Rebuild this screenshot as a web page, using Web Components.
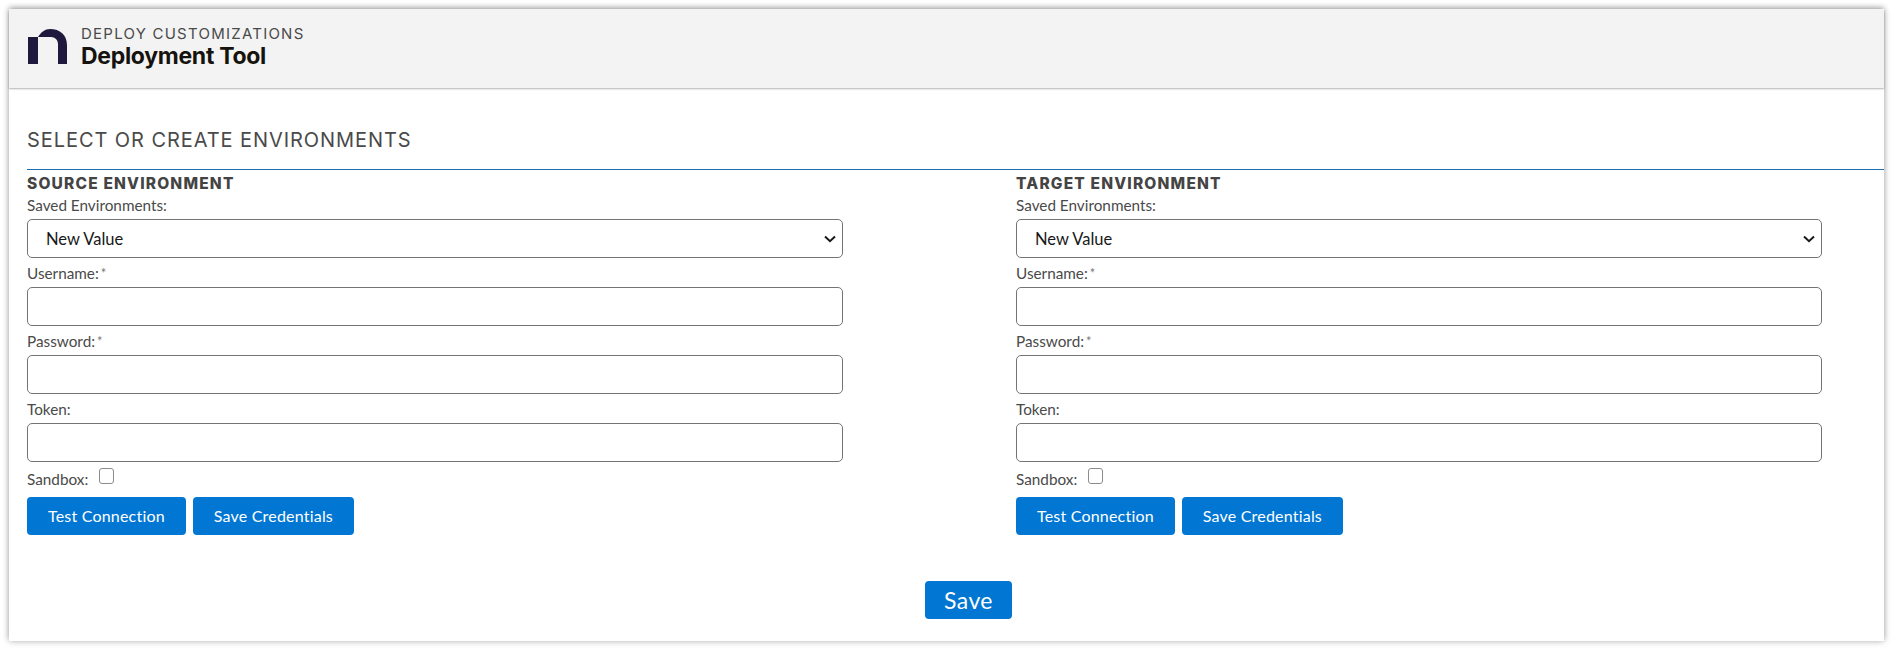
<!DOCTYPE html>
<html lang="en">
<head>
<meta charset="utf-8">
<title>Deployment Tool</title>
<style>
  html, body { margin: 0; background: #fff; }
  body { padding: 9px 8px 8px 9px; font-family: "Lato", "Liberation Sans", sans-serif; color: #444; }
</style>
</head>
<body>
<deploy-app></deploy-app>

<script>
class PageHeader extends HTMLElement {
  constructor() {
    super();
    this.attachShadow({ mode: 'open' }).innerHTML = `
      <style>
        :host { display: flex; align-items: center; gap: 14px; height: 79px; box-sizing: border-box; padding: 0 0 4px 19px;
          background: #f3f3f3; border-radius: 4px 4px 0 0; box-shadow: 0 1px 2px rgba(0,0,0,.3); position: relative; }
        svg { width: 39px; height: 35px; display: block; }
        .eyebrow { font: 400 15px/18px "Inter", sans-serif; letter-spacing: 1.24px; color: #4a4a4a; }
        .title { font: 700 23px/26px "Inter", sans-serif; letter-spacing: -.3px; color: #16130f; }
      </style>
      <svg viewBox="0 0 39 35" aria-hidden="true">
        <path fill="#1f1a3d" d="M0 8H10C13 3 17 0 22 0C32 0 39 6 39 16V35H30V15C30 11 27 8 23 8H10V35H0Z"/>
      </svg>
      <div>
        <div class="eyebrow"><slot name="eyebrow"></slot></div>
        <div class="title"><slot name="title"></slot></div>
      </div>`;
  }
}
customElements.define('page-header', PageHeader);

class UiButton extends HTMLElement {
  constructor() {
    super();
    this.attachShadow({ mode: 'open' }).innerHTML = `
      <style>
        :host { display: inline-block; }
        button { display: block; height: 38px; padding: 0 21px; border: 0; border-radius: 4px; background: #0176d3; color: #fff;
          font: 400 16px/38px "Lato", sans-serif; letter-spacing: .2px; cursor: pointer; }
        :host([large]) button { padding: 0 19px; font-size: 23px; letter-spacing: .4px; }
      </style>
      <button type="button"><slot></slot></button>`;
  }
}
customElements.define('ui-button', UiButton);

class FormField extends HTMLElement {
  static get observedAttributes() { return ['label']; }

  constructor() {
    super();
    this.attachShadow({ mode: 'open' });
  }

  connectedCallback() {
    this.render();
  }

  attributeChangedCallback() {
    this.render();
  }

  render() {
    const required = this.hasAttribute('required');
    const isSelect = this.getAttribute('type') === 'select';
    const type = this.getAttribute('type') === 'password' ? 'password' : 'text';
    const control = isSelect
      ? `<div class="wrap"><select><option>New Value</option></select>
           <svg viewBox="0 0 12 8" aria-hidden="true"><path d="M1 1.500L6 6.200L11 1.500" fill="none" stroke="#181818" stroke-width="2"/></svg></div>`
      : `<input type="${type}">`;

    this.shadowRoot.innerHTML = `
      <style>
        :host { display: block; height: 68px; }
        label { display: block; height: 29px; font: 400 15.300px/30px "Lato", sans-serif; color: #4a4a4a; }
        .req { font-size: 13px; color: #777; margin-left: 2px; vertical-align: 1px; }
        .wrap { position: relative; }
        .wrap svg { position: absolute; right: 7px; top: 16px; width: 12px; height: 8px; pointer-events: none; }
        input, select { display: block; width: 100%; height: 39px; box-sizing: border-box; margin: 0; background: #fff;
          border: 1px solid #747474; border-radius: 5px; color: #181818; outline: 0; }
        select { appearance: none; padding: 0 0 0 18px; font: 400 16.500px "Lato", sans-serif; }
      </style>
      <label>${this.getAttribute('label')}${required ? '<span class="req">*</span>' : ''}</label>
      ${control}`;
  }
}
customElements.define('form-field', FormField);

class EnvPanel extends HTMLElement {
  constructor() {
    super();
    this.attachShadow({ mode: 'open' });
  }

  connectedCallback() {
    const width = this.getAttribute('field-width');
    this.shadowRoot.innerHTML = `
      <style>
        :host { display: block; }
        h3 { margin: 0; height: 25px; box-sizing: border-box; padding-top: 3px; font: 800 15.500px/22px "Inter", sans-serif; letter-spacing: 1.180px; color: #444; }
        .fields { width: ${width}px; margin-top: -5px; }
        .sandbox { display: flex; height: 35px; box-sizing: border-box; padding-top: 2px; font: 400 15.300px/30px "Lato", sans-serif; color: #4a4a4a; }
        .box { width: 15px; height: 16px; box-sizing: border-box; margin: 4px 0 0 11px; border: 1px solid #8c8c8c; border-radius: 3px; background: #fff; }
        .actions { display: flex; gap: 7px; }
      </style>
      <h3>${this.getAttribute('heading')}</h3>
      <div class="fields">
        <form-field label="Saved Environments:" type="select"></form-field>
        <form-field label="Username:" required></form-field>
        <form-field label="Password:" type="password" required></form-field>
        <form-field label="Token:"></form-field>
      </div>
      <div class="sandbox"><span>Sandbox:</span><div class="box"></div></div>
      <div class="actions">
        <ui-button>Test Connection</ui-button>
        <ui-button>Save Credentials</ui-button>
      </div>`;
  }
}
customElements.define('env-panel', EnvPanel);

class DeployApp extends HTMLElement {
  constructor() {
    super();
    this.attachShadow({ mode: 'open' }).innerHTML = `
      <style>
        :host { display: block; height: 632px; background: #fff; box-shadow: 0 0 7px rgba(0,0,0,.28), 0 -2px 5px rgba(0,0,0,.18); }
        .content { padding-left: 18px; }
        h2 { margin: 0; height: 82px; box-sizing: border-box; padding-top: 39px; border-bottom: 1px solid #1b6fb0;
          font: 400 20px/26px "Inter", sans-serif; letter-spacing: .93px; color: #4a4a4a; }
        .panels { display: grid; grid-template-columns: 989px 1fr; }
        .footer { display: flex; justify-content: center; padding: 46px 0 0 26px; }
      </style>
      <page-header>
        <span slot="eyebrow">DEPLOY CUSTOMIZATIONS</span>
        <span slot="title">Deployment Tool</span>
      </page-header>
      <div class="content">
        <h2>SELECT OR CREATE ENVIRONMENTS</h2>
        <div class="panels">
          <env-panel heading="SOURCE ENVIRONMENT" field-width="816"></env-panel>
          <env-panel heading="TARGET ENVIRONMENT" field-width="806"></env-panel>
        </div>
        <div class="footer"><ui-button large>Save</ui-button></div>
      </div>`;
  }
}
customElements.define('deploy-app', DeployApp);
</script>
</body>
</html>
